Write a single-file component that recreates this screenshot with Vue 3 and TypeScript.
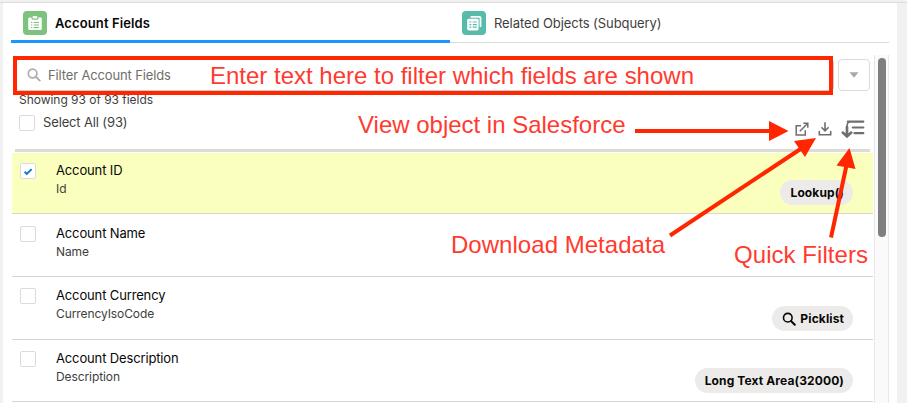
<script setup lang="ts">
import { ref } from 'vue'

interface Field {
  label: string
  apiName: string
  type?: string
  searchable?: boolean
  selected: boolean
}

const fields = ref<Field[]>([
  { label: 'Account ID', apiName: 'Id', type: 'Lookup()', selected: true },
  { label: 'Account Name', apiName: 'Name', selected: false },
  { label: 'Account Currency', apiName: 'CurrencyIsoCode', type: 'Picklist', searchable: true, selected: false },
  { label: 'Account Description', apiName: 'Description', type: 'Long Text Area(32000)', selected: false }
])
</script>

<template>
  <div class="page">
    <section class="panel">
      <nav class="tabs">
        <div class="tab active">
          <span class="tab-icon green">
            <svg viewBox="0 0 24 24" width="24" height="24">
              <path fill="#fff" d="M9.6 6.9V6.3q0-1.3 1.3-1.3h2.2q1.3 0 1.3 1.3v.6q0 .7-.7.7h-3.4q-.7 0-.7-.7z" />
              <path fill="#fff" d="M6.5 6.6h2v.6q0 1.5 1.5 1.5h4q1.5 0 1.5-1.5v-.6h2q1.3 0 1.3 1.3v9.8q0 1.3-1.3 1.3h-11q-1.3 0-1.3-1.3V7.9q0-1.3 1.3-1.3z" />
              <path class="rule" d="M8 11.5h1.3M10.7 11.5h5.3M8 14h1.3M10.7 14h5.3M8 16.5h1.3M10.7 16.5h5.3" />
            </svg>
          </span>
          <span>Account Fields</span>
        </div>
        <div class="tab">
          <span class="tab-icon teal">
            <svg viewBox="0 0 24 24" width="24" height="24">
              <path d="M9.3 5.8h8.2q1 0 1 1v8.4" fill="none" stroke="#fff" stroke-width="1.8" stroke-linecap="round" />
              <rect x="5.2" y="7.8" width="11.4" height="11.6" rx="1.4" fill="#fff" />
              <path class="rule" d="M7.3 11h2M10.8 11h4M7.3 13.6h2M10.8 13.6h4M7.3 16.2h2M10.8 16.2h4" />
            </svg>
          </span>
          <span>Related Objects (Subquery)</span>
        </div>
      </nav>

      <div class="content">
        <div class="list">
          <header class="head">
            <div class="search-row">
              <div class="search">
                <svg viewBox="0 0 14 14" width="14" height="14">
                  <circle cx="5.6" cy="5.5" r="4.3" fill="none" stroke="#b0adab" stroke-width="1.7" />
                  <path d="M8.8 8.7l4 3.9" stroke="#b0adab" stroke-width="1.9" stroke-linecap="round" />
                </svg>
                <span>Filter Account Fields</span>
              </div>
              <button class="menu" type="button">
                <svg viewBox="0 0 10 6" width="10" height="6"><path d="M.5.3h9L5 5.8z" fill="#aaa8a6" /></svg>
              </button>
            </div>
            <p class="count">Showing 93 of 93 fields</p>
            <div class="tools">
              <span class="check"></span>
              <span class="select-all">Select All (93)</span>
              <span class="actions">
                <svg viewBox="0 0 14 14" width="14" height="14" fill="none" stroke="#706e6b" stroke-width="1.5">
                  <path d="M6 3.8H1.2V12.9H10.3V8.2" />
                  <path d="M4.8 9.2L12.5 1.5M8.3 1.2H12.8V5.7" />
                </svg>
                <svg viewBox="0 0 14 14" width="14" height="14" fill="none" stroke="#706e6b" stroke-width="1.6" stroke-linecap="round">
                  <path d="M1.3 9.5V12.7H12.7V9.5" />
                  <path d="M7 .9V8.5M3.9 5.7L7 8.9L10.1 5.7" />
                </svg>
                <svg viewBox="0 0 24 18" width="24" height="18" fill="none" stroke="#706e6b" stroke-linecap="round">
                  <path d="M6.8 1.7H22.3M11.8 7.5H22.3M13.5 13.2H22.3" stroke-width="2.2" />
                  <path d="M6 7V16M1.8 12.6L6 16.4L10.2 12.6" stroke-width="2.7" />
                  <path d="M6 6.5Q6 2.5 8.500 1.7" stroke-width="1.6" />
                </svg>
              </span>
            </div>
            <div class="bar"></div>
          </header>

          <ul class="rows">
            <li v-for="f in fields" :key="f.apiName" class="row" :class="{ selected: f.selected }">
              <span class="check" @click="f.selected = !f.selected">
                <svg v-if="f.selected" viewBox="0 0 14 14" width="14" height="14">
                  <path d="M3.6 7.8L5.8 9.9L10.6 5.1" fill="none" stroke="#0b76d3" stroke-width="1.9" />
                </svg>
              </span>
              <div class="names">
                <div class="label">{{ f.label }}</div>
                <div class="api">{{ f.apiName }}</div>
              </div>
              <span v-if="f.type" class="badge">
                <svg v-if="f.searchable" viewBox="0 0 14 14" width="14" height="14">
                  <circle cx="5.8" cy="5.7" r="4.3" fill="none" stroke="#080707" stroke-width="1.6" />
                  <path d="M9 9l3.8 3.8" stroke="#080707" stroke-width="2" stroke-linecap="round" />
                </svg>
                {{ f.type }}
              </span>
            </li>
          </ul>
        </div>
        <div class="track"><div class="thumb"></div></div>
      </div>
    </section>

    <svg class="notes" viewBox="0 0 907 403" width="907" height="403">
      <rect x="15" y="58" width="816" height="35" fill="none" stroke="#ff2600" stroke-width="4" />
      <g stroke="#ff2600" stroke-width="4">
        <path d="M635 131H772" />
        <path d="M670 235.5L802 148" />
        <path d="M831 237.5L847 163" />
      </g>
      <g fill="#ff2600">
        <path d="M769 121L788.5 131L769 141z" />
        <path d="M816 138L794 141L805 157z" />
        <path d="M849.5 148L836.5 165.5L855.5 169z" />
      </g>
      <g class="note">
        <text x="210" y="84" textLength="484">Enter text here to filter which fields are shown</text>
        <text x="358" y="133" textLength="267.5">View object in Salesforce</text>
        <text x="451" y="253" textLength="214">Download Metadata</text>
        <text x="734" y="263" textLength="134">Quick Filters</text>
      </g>
    </svg>
  </div>
</template>

<style>
body {
  overflow: hidden;
}
</style>

<style scoped>
* {
  box-sizing: border-box;
}
.page {
  position: relative;
  height: 403px;
  padding: 2px 10px 0 3px;
  overflow: hidden;
  background: #f1f1f1;
  font: 13px/18px Inter, sans-serif;
  letter-spacing: -0.14px;
  color: #3e3e3c;
}
.page::before {
  content: '';
  display: block;
  height: 1px;
  margin: 0 -10px 0 -3px;
  background: #dddbda;
}
.panel {
  height: 400px;
  padding: 0 8px;
  background: #fff;
}
.tabs {
  display: grid;
  grid-template-columns: 1fr 1fr;
  height: 40px;
  border-bottom: 1px solid #dddbda;
}
.tab {
  display: flex;
  align-items: center;
  gap: 8px;
  height: 40px;
  padding: 2px 12px 0;
  border-bottom: 3px solid transparent;
  letter-spacing: -0.07px;
}
.tab.active {
  border-bottom-color: #1b96ff;
  color: #080707;
  font-weight: 600;
  letter-spacing: 0.11px;
}
.tab-icon {
  width: 24px;
  height: 24px;
  border-radius: 4px;
}
.tab-icon svg {
  display: block;
}
.green {
  background: #7dc37d;
  color: #7dc37d;
}
.teal {
  background: #56bbaa;
  color: #56bbaa;
}
.rule {
  stroke: currentColor;
  stroke-width: 1.2;
}
.content {
  display: flex;
  height: 348px;
  margin-top: 12px;
  padding-left: 1px;
}
.list {
  flex: 1;
  padding-right: 1px;
}
.head {
  display: flex;
  flex-direction: column;
  height: 98px;
  padding: 4px 3px 0;
}
.search-row {
  display: flex;
  gap: 4px;
}
.search {
  display: flex;
  flex: 1;
  align-items: center;
  gap: 7px;
  height: 32px;
  padding-left: 11px;
  border: 1px solid #d0cecd;
  border-radius: 4px;
  color: #706e6b;
}
.menu {
  display: flex;
  align-items: center;
  justify-content: center;
  width: 32px;
  height: 32px;
  padding: 0;
  border: 1px solid #dddbda;
  border-radius: 4px;
  background: #fff;
}
.count {
  margin: 0 4px;
  font-size: 12px;
  letter-spacing: -0.03px;
}
.tools {
  display: flex;
  align-items: center;
  height: 28px;
  padding-left: 4px;
}
.check {
  flex: none;
  width: 16px;
  height: 16px;
  border: 1px solid #dddbda;
  border-radius: 2px;
  background: #fff;
}
.check svg {
  display: block;
}
.select-all {
  margin-left: 8px;
  padding-bottom: 2px;
}
.actions {
  display: flex;
  align-items: center;
  gap: 9px;
  margin-left: auto;
  padding: 12px 5px 0 0;
}
.bar {
  flex: none;
  height: 3px;
  margin-top: 12px;
  background: #dddbda;
}
.rows {
  margin: 0;
  padding: 0;
  list-style: none;
}
.row {
  display: flex;
  height: 63px;
  padding: 11px 20px 0 8px;
  border-bottom: 1px solid #d8d6d5;
}
.row:first-child {
  height: 61px;
  padding-top: 10px;
}
.row:nth-child(2) {
  padding-top: 12px;
}
.row:last-child {
  height: 62px;
}
.row.selected {
  background: #faffbd;
}
.names {
  flex: 1;
  margin: -1px 0 0 20px;
}
.label {
  height: 18px;
  line-height: 17px;
  color: #080707;
}
.api {
  font-size: 12px;
  line-height: 17px;
  letter-spacing: -0.09px;
}
.badge {
  display: flex;
  align-items: center;
  align-self: flex-end;
  gap: 4px;
  height: 25px;
  margin-bottom: 8px;
  padding: 0 9px 0 10px;
  border-radius: 13px;
  background: #ecebea;
  color: #080707;
  font-size: 12px;
  font-weight: 700;
  letter-spacing: 0.12px;
}
.track {
  width: 15px;
  padding: 3px 0 0 3px;
  border: solid #e8e8e8;
  border-width: 0 1px;
  background: #fafafa;
}
.thumb {
  width: 8px;
  height: 179px;
  border-radius: 4px;
  background: #7f7f7f;
}
.notes {
  position: absolute;
  top: 0;
  left: 0;
  pointer-events: none;
}
.note {
  fill: #ff3b30;
  font: 24px 'Liberation Sans', Arial, sans-serif;
  letter-spacing: 0;
}
</style>
